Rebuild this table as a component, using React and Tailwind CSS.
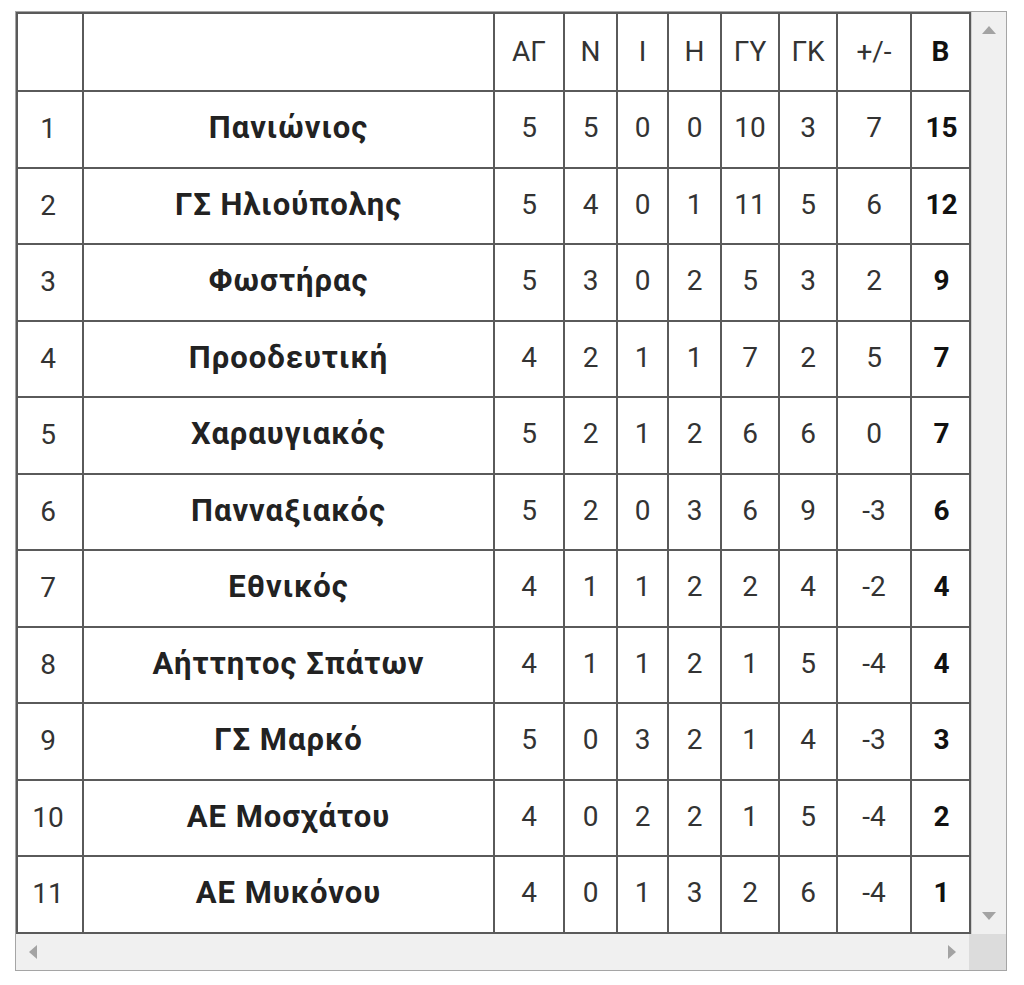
const teams = [
  ["1", "Πανιώνιος", 5, 5, 0, 0, 10, 3, 7, 15],
  ["2", "ΓΣ Ηλιούπολης", 5, 4, 0, 1, 11, 5, 6, 12],
  ["3", "Φωστήρας", 5, 3, 0, 2, 5, 3, 2, 9],
  ["4", "Προοδευτική", 4, 2, 1, 1, 7, 2, 5, 7],
  ["5", "Χαραυγιακός", 5, 2, 1, 2, 6, 6, 0, 7],
  ["6", "Πανναξιακός", 5, 2, 0, 3, 6, 9, -3, 6],
  ["7", "Εθνικός", 4, 1, 1, 2, 2, 4, -2, 4],
  ["8", "Αήττητος Σπάτων", 4, 1, 1, 2, 1, 5, -4, 4],
  ["9", "ΓΣ Μαρκό", 5, 0, 3, 2, 1, 4, -3, 3],
  ["10", "ΑΕ Μοσχάτου", 4, 0, 2, 2, 1, 5, -4, 2],
  ["11", "ΑΕ Μυκόνου", 4, 0, 1, 3, 2, 6, -4, 1],
];

const cols = [66, 411, 70, 53, 51, 53, 58, 58, 74, 59];
const heads = ["ΑΓ", "Ν", "Ι", "Η", "ΓΥ", "ΓΚ", "+/-"];

const cell = "border-2 border-[#5a5a5a] text-center align-middle p-0";

const App = () => {
  return (
    <div className="bg-white w-[1024px] h-[985px] pt-[11px] pl-[15px] font-['Roboto',sans-serif] text-[28px] text-[#333]">
      <div className="w-[992px] border border-[#a5a5a5] flex flex-col">
        <div className="flex">
          <table className="table-fixed border-collapse w-[953px]">
            <colgroup>
              {cols.map((w, i) => (
                <col key={i} style={{ width: w }} />
              ))}
            </colgroup>
            <thead>
              <tr className="h-[78px]">
                <th className={cell}></th>
                <th className={cell}></th>
                {heads.map(h => (
                  <th key={h} className={cell + " font-normal"}>{h}</th>
                ))}
                <th className={cell + " font-bold text-[#111]"}>Β</th>
              </tr>
            </thead>
            <tbody>
              {teams.map(t => (
                <tr key={t[0]} className="h-[76.5px]">
                  <td className={cell + " pr-[4px]"}>{t[0]}</td>
                  <td className={cell + " font-bold text-[#222] text-[31px] tracking-[1px] leading-none pb-[3px]"}>{t[1]}</td>
                  {t.slice(2, 9).map((v, i) => (
                    <td key={i} className={cell + " pb-[2px]"}>{v}</td>
                  ))}
                  <td className={cell + " font-bold text-[#111] pb-[2px] pl-[2px]"}>{t[9]}</td>
                </tr>
              ))}
            </tbody>
          </table>
          <div className="w-[37px] bg-[#f0f0f0] border-l border-[#d0d0d0] flex flex-col justify-between items-center py-[14px]">
            <svg width="14" height="8" viewBox="0 0 14 8"><path d="M7 0 L14 8 L0 8 Z" fill="#a3a3a3" /></svg>
            <svg width="14" height="8" viewBox="0 0 14 8"><path d="M0 0 L14 0 L7 8 Z" fill="#a3a3a3" /></svg>
          </div>
        </div>
        <div className="flex h-[36px]">
          <div className="w-[953px] bg-[#f0f0f0] flex justify-between items-center px-[13px]">
            <svg width="8" height="14" viewBox="0 0 8 14"><path d="M8 0 L8 14 L0 7 Z" fill="#a3a3a3" /></svg>
            <svg width="8" height="14" viewBox="0 0 8 14"><path d="M0 0 L8 7 L0 14 Z" fill="#a3a3a3" /></svg>
          </div>
          <div className="flex-1 bg-[#dcdcdc]"></div>
        </div>
      </div>
    </div>
  );
};

export default App;
